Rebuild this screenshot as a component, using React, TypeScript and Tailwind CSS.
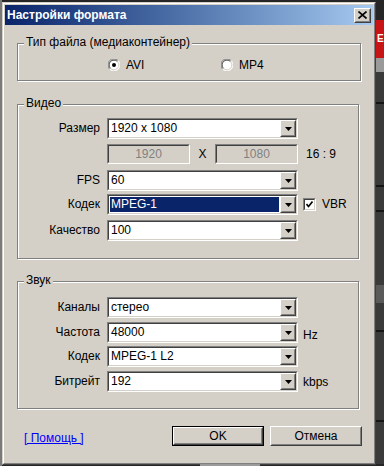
import React from "react";

const sunkenOuter = "border border-t-[#808080] border-l-[#808080] border-b-white border-r-white";
const sunkenInner = "border border-t-[#404040] border-l-[#404040] border-b-[#d4d0c8] border-r-[#d4d0c8]";
const raisedOuter = "border border-t-white border-l-white border-b-[#404040] border-r-[#404040]";
const raisedInner = "border border-t-[#d4d0c8] border-l-[#d4d0c8] border-b-[#808080] border-r-[#808080]";

function Arrow() {
  return (
    <div className={`h-full w-[16px] bg-[#d4d0c8] ${raisedOuter}`}>
      <div className={`flex h-full w-full items-center justify-center ${raisedInner}`}>
        <svg width="7" height="4" viewBox="0 0 7 4">
          <path d="M0 0h7L3.5 4z" fill="#000" />
        </svg>
      </div>
    </div>
  );
}

function Combo({ value, selected }: { value: string; selected?: boolean }) {
  return (
    <div className={`h-[21px] w-[191px] ${sunkenOuter}`}>
      <div className={`flex h-full w-full bg-white ${sunkenInner}`}>
        <div className="flex flex-1 items-stretch p-[1px]">
          <div
            className={
              selected
                ? "flex flex-1 items-center bg-[#0a246a] pl-[1px] text-white"
                : "flex flex-1 items-center pl-[1px] text-black"
            }
          >
            {value}
          </div>
        </div>
        <Arrow />
      </div>
    </div>
  );
}

function Row({
  label,
  value,
  selected,
  extra,
  className,
}: {
  label: string;
  value: string;
  selected?: boolean;
  extra?: React.ReactNode;
  className?: string;
}) {
  return (
    <div className={`flex h-[21px] items-center ${className ?? ""}`}>
      <div className="w-[82px] text-right">{label}</div>
      <div className="ml-[7px]">
        <Combo value={value} selected={selected} />
      </div>
      {extra}
    </div>
  );
}

function Group({
  legend,
  className,
  children,
}: {
  legend: string;
  className: string;
  children: React.ReactNode;
}) {
  return (
    <div
      className={`relative border border-[#808080] shadow-[inset_1px_1px_0_#ffffff,1px_1px_0_#ffffff] ${className}`}
    >
      <div className="absolute left-[6px] top-[-9px] bg-[#d4d0c8] px-[2px] leading-[15px]">{legend}</div>
      {children}
    </div>
  );
}

function Radio({ checked }: { checked?: boolean }) {
  return (
    <svg width="12" height="12" viewBox="0 0 12 12">
      <circle cx="6" cy="6" r="5.5" fill="#ffffff" />
      <path d="M1.6 10.2A5.5 5.5 0 0 1 10.2 1.6" stroke="#808080" strokeWidth="1" fill="none" />
      <path d="M10.2 1.6A5.5 5.5 0 0 1 1.6 10.2" stroke="#ffffff" strokeWidth="1" fill="none" />
      <path d="M2.5 9.4A4.5 4.5 0 0 1 9.4 2.5" stroke="#404040" strokeWidth="1" fill="none" />
      <path d="M9.4 2.5A4.5 4.5 0 0 1 2.5 9.4" stroke="#d4d0c8" strokeWidth="1" fill="none" />
      {checked && <circle cx="6" cy="6" r="2" fill="#000" />}
    </svg>
  );
}

function Edit({ value }: { value: string }) {
  return (
    <div className={`h-[20px] w-[83px] ${sunkenOuter}`}>
      <div className={`flex h-full w-full items-center justify-center bg-[#d4d0c8] text-[#808080] ${sunkenInner}`}>
        {value}
      </div>
    </div>
  );
}

function Button({ label, def }: { label: string; def?: boolean }) {
  return (
    <div className={def ? "h-[20px] w-[92px] border border-black" : "h-[20px] w-[92px]"}>
      <div className={`h-full w-full bg-[#d4d0c8] ${raisedOuter}`}>
        <div className={`flex h-full w-full items-center justify-center ${raisedInner}`}>{label}</div>
      </div>
    </div>
  );
}

export default function App() {
  return (
    <div className="relative h-[466px] w-[384px] overflow-hidden bg-[#262626] font-['Liberation_Sans',Arial,sans-serif] text-[12px] leading-[15px] text-black">
      {/* background scraps */}
      <div className="absolute left-0 top-0 h-[466px] w-[2px] bg-[#7a7a7a]" />
      <div className="absolute left-[376px] top-[20px] flex h-[38px] w-[8px] items-center overflow-hidden bg-[#c81414] pl-[1px] text-[10px] font-bold leading-[12px] text-white">
        E
      </div>
      <div className="absolute left-[376px] top-[58px] h-[14px] w-[8px] bg-[#9a9a9a]" />
      <div className="absolute left-[376px] top-[72px] h-[392px] w-[8px] bg-[#3a3a3a]" />
      <div className="absolute left-[376px] top-[102px] h-[2px] w-[8px] bg-[#151515]" />
      <div className="absolute left-[376px] top-[185px] h-[2px] w-[8px] bg-[#151515]" />
      <div className="absolute left-[376px] top-[210px] h-[2px] w-[8px] bg-[#151515]" />
      <div className="absolute left-[376px] top-[285px] h-[18px] w-[8px] bg-[#5a5a5a]" />
      <div className="absolute left-[376px] top-[330px] h-[2px] w-[8px] bg-[#151515]" />
      <div className="absolute left-[376px] top-[420px] h-[2px] w-[8px] bg-[#151515]" />
      <div className="absolute left-[200px] top-[464px] h-[2px] w-[60px] bg-[#9a9a9a]" />

      {/* dialog */}
      <div className="ml-[2px] mt-[2px] h-[463px] w-[374px] border border-t-[#d4d0c8] border-l-[#d4d0c8] border-b-[#404040] border-r-[#404040] bg-[#d4d0c8]">
        <div className="h-full w-full border border-t-white border-l-white border-b-[#808080] border-r-[#808080] p-[1px]">
          {/* title bar */}
          <div className="flex h-[20px] items-center bg-gradient-to-r from-[#0a246a] to-[#a6caf0] pl-[2px] pr-[2px]">
            <div className="flex-1 text-[12px] font-bold text-white">Настройки формата</div>
            <div className={`h-[15px] w-[17px] bg-[#d4d0c8] ${raisedOuter}`}>
              <div className={`flex h-full w-full items-center justify-center ${raisedInner}`}>
                <svg width="9" height="8" viewBox="0 0 9 8">
                  <path d="M0.5 0.5L8.5 7.5M8.5 0.5L0.5 7.5" stroke="#000" strokeWidth="1.6" />
                </svg>
              </div>
            </div>
          </div>

          {/* group 1 */}
          <Group legend="Тип файла (медиаконтейнер)" className="ml-[12px] mt-[18px] h-[38px] w-[344px]">
            <div className="mt-[14px] flex h-[14px] items-center">
              <div className="ml-[90px] flex w-[113px] items-center">
                <Radio checked />
                <span className="ml-[6px]">AVI</span>
              </div>
              <div className="flex items-center">
                <Radio />
                <span className="ml-[6px]">MP4</span>
              </div>
            </div>
          </Group>

          {/* group 2 */}
          <Group legend="Видео" className="ml-[12px] mt-[23px] h-[155px] w-[342px]">
            <div className="flex flex-col">
              <Row className="mt-[13px]" label="Размер" value="1920 x 1080" />
              <div className="mt-[5px] flex h-[20px] items-center">
                <div className="ml-[89px]">
                  <Edit value="1920" />
                </div>
                <div className="w-[25px] text-center">X</div>
                <Edit value="1080" />
                <div className="ml-[8px]">16 : 9</div>
              </div>
              <Row className="mt-[6px]" label="FPS" value="60" />
              <Row
                className="mt-[3px]"
                label="Кодек"
                value="MPEG-1"
                selected
                extra={
                  <div className="ml-[5px] flex items-center">
                    <div className={`h-[13px] w-[13px] ${sunkenOuter}`}>
                      <div className={`flex h-full w-full items-center justify-center bg-white ${sunkenInner}`}>
                        <svg width="7" height="7" viewBox="0 0 7 7">
                          <path d="M0.5 3L2.5 5.5L6.5 0.5" stroke="#000" strokeWidth="1.6" fill="none" />
                        </svg>
                      </div>
                    </div>
                    <span className="ml-[6px]">VBR</span>
                  </div>
                }
              />
              <Row className="mt-[5px]" label="Качество" value="100" />
            </div>
          </Group>

          {/* group 3 */}
          <Group legend="Звук" className="ml-[12px] mt-[22px] h-[128px] w-[342px]">
            <div className="flex flex-col">
              <Row className="mt-[15px]" label="Каналы" value="стерео" />
              <Row
                className="mt-[4px]"
                label="Частота"
                value="48000"
                extra={<span className="ml-[5px] mt-[6px]">Hz</span>}
              />
              <Row className="mt-[3px]" label="Кодек" value="MPEG-1 L2" />
              <Row
                className="mt-[4px]"
                label="Битрейт"
                value="192"
                extra={<span className="ml-[5px] mt-[2px]">kbps</span>}
              />
            </div>
          </Group>

          {/* buttons */}
          <div className="mt-[17px] flex h-[20px] items-center">
            <div className="ml-[19px] w-[148px] pt-[4px] text-[#0000ff] underline">[ Помощь ]</div>
            <Button label="OK" def />
            <div className="ml-[6px]">
              <Button label="Отмена" />
            </div>
          </div>
        </div>
      </div>
    </div>
  );
}
